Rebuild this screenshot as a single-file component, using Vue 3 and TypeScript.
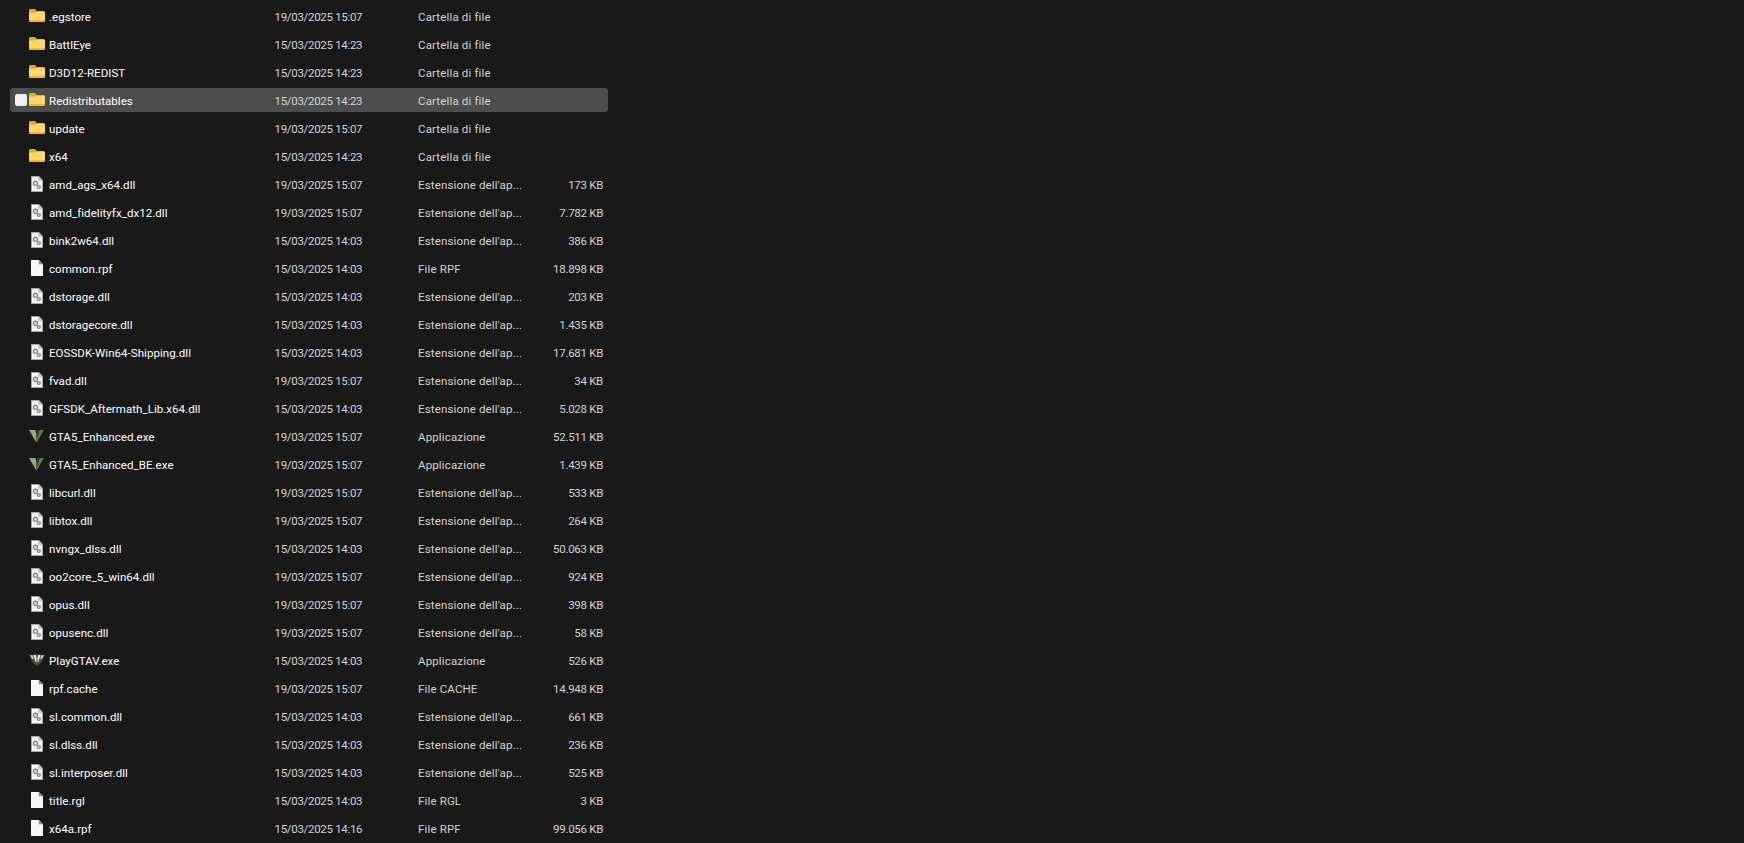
<script setup lang="ts">
type Kind = 'folder' | 'dll' | 'doc' | 'gta' | 'play'
interface Item { name: string; date: string; type: string; size: string; kind: Kind; selected?: boolean }

const A = '19/03/2025 15:07'
const B = '15/03/2025 14:23'
const C = '15/03/2025 14:03'
const FOLDER = 'Cartella di file'
const EXT = "Estensione dell'ap..."
const APP = 'Applicazione'

const items: Item[] = [
  { name: '.egstore', date: A, type: FOLDER, size: '', kind: 'folder' },
  { name: 'BattlEye', date: B, type: FOLDER, size: '', kind: 'folder' },
  { name: 'D3D12-REDIST', date: B, type: FOLDER, size: '', kind: 'folder' },
  { name: 'Redistributables', date: B, type: FOLDER, size: '', kind: 'folder', selected: true },
  { name: 'update', date: A, type: FOLDER, size: '', kind: 'folder' },
  { name: 'x64', date: B, type: FOLDER, size: '', kind: 'folder' },
  { name: 'amd_ags_x64.dll', date: A, type: EXT, size: '173 KB', kind: 'dll' },
  { name: 'amd_fidelityfx_dx12.dll', date: A, type: EXT, size: '7.782 KB', kind: 'dll' },
  { name: 'bink2w64.dll', date: C, type: EXT, size: '386 KB', kind: 'dll' },
  { name: 'common.rpf', date: C, type: 'File RPF', size: '18.898 KB', kind: 'doc' },
  { name: 'dstorage.dll', date: C, type: EXT, size: '203 KB', kind: 'dll' },
  { name: 'dstoragecore.dll', date: C, type: EXT, size: '1.435 KB', kind: 'dll' },
  { name: 'EOSSDK-Win64-Shipping.dll', date: C, type: EXT, size: '17.681 KB', kind: 'dll' },
  { name: 'fvad.dll', date: A, type: EXT, size: '34 KB', kind: 'dll' },
  { name: 'GFSDK_Aftermath_Lib.x64.dll', date: C, type: EXT, size: '5.028 KB', kind: 'dll' },
  { name: 'GTA5_Enhanced.exe', date: A, type: APP, size: '52.511 KB', kind: 'gta' },
  { name: 'GTA5_Enhanced_BE.exe', date: A, type: APP, size: '1.439 KB', kind: 'gta' },
  { name: 'libcurl.dll', date: A, type: EXT, size: '533 KB', kind: 'dll' },
  { name: 'libtox.dll', date: A, type: EXT, size: '264 KB', kind: 'dll' },
  { name: 'nvngx_dlss.dll', date: C, type: EXT, size: '50.063 KB', kind: 'dll' },
  { name: 'oo2core_5_win64.dll', date: A, type: EXT, size: '924 KB', kind: 'dll' },
  { name: 'opus.dll', date: A, type: EXT, size: '398 KB', kind: 'dll' },
  { name: 'opusenc.dll', date: A, type: EXT, size: '58 KB', kind: 'dll' },
  { name: 'PlayGTAV.exe', date: C, type: APP, size: '526 KB', kind: 'play' },
  { name: 'rpf.cache', date: A, type: 'File CACHE', size: '14.948 KB', kind: 'doc' },
  { name: 'sl.common.dll', date: C, type: EXT, size: '661 KB', kind: 'dll' },
  { name: 'sl.dlss.dll', date: C, type: EXT, size: '236 KB', kind: 'dll' },
  { name: 'sl.interposer.dll', date: C, type: EXT, size: '525 KB', kind: 'dll' },
  { name: 'title.rgl', date: C, type: 'File RGL', size: '3 KB', kind: 'doc' },
  { name: 'x64a.rpf', date: '15/03/2025 14:16', type: 'File RPF', size: '99.056 KB', kind: 'doc' },
]
</script>

<template>
  <div class="list">
    <div v-for="item in items" :key="item.name" class="row" :class="{ selected: item.selected }">
      <span class="check"><i v-if="item.selected" class="box"></i></span>
      <span class="icon">
        <svg v-if="item.kind === 'folder'" width="16" height="14" viewBox="0 0 16 14">
          <path d="M0 1.500C0 .7.600 0 1.400 0h4c.4 0 .8.200 1 .5L8 2h6.500c.8 0 1.500.7 1.500 1.500V5H0z" fill="#e8a522"/>
          <path d="M0 3.500h6.500L8 2.800h6.500c.8 0 1.500.6 1.500 1.400v7.400c0 .8-.7 1.400-1.500 1.400h-13C.7 13 0 12.400 0 11.600z" fill="#fdd868"/>
          <path d="M0 11.500c0 .8.700 1.500 1.500 1.500h13c.8 0 1.500-.7 1.500-1.500V11H0z" fill="#efb53a"/>
        </svg>
        <svg v-else-if="item.kind === 'dll'" class="nudge" width="12" height="16" viewBox="0 0 12 16">
          <path d="M.5.500h7.300l3.700 3.700v11.300H.5z" fill="#f4f4f4" stroke="#a6a6a6"/>
          <path d="M7.800.5v3.700h3.700z" fill="#d2d2d2" stroke="#9a9a9a" stroke-width=".6"/>
          <circle cx="4.500" cy="7.300" r="2.100" fill="#dcdcdc" stroke="#8f8f8f" stroke-width="1.400"/>
          <circle cx="7.800" cy="11" r="1.500" fill="#dcdcdc" stroke="#7d7d7d" stroke-width="1.200"/>
        </svg>
        <svg v-else-if="item.kind === 'doc'" class="nudge" width="12" height="16" viewBox="0 0 12 16">
          <path d="M0 0h7.800L12 4.200V16H0z" fill="#f7f7f7"/>
          <path d="M7.800 0v4.200H12z" fill="#8c8c8c"/>
        </svg>
        <svg v-else-if="item.kind === 'gta'" width="15" height="12" viewBox="0 0 15 12">
          <path d="M0 0h6.200L7.500 4 7.500 12H7L1.800 3z" fill="#9aa58a"/>
          <path d="M7.500 4L8.800 0H15l-1.800 3L8 12h-.5z" fill="#587a35"/>
          <path d="M7.500 4L8.800 0h2L8.500 7.500 7.500 8z" fill="#2f4420"/>
        </svg>
        <svg v-else width="16" height="12" viewBox="0 0 16 12">
          <path d="M0 .6l3.200.7L5 .2h6l1.800 1.100L16 .6l-1.800 3.600-1.700 4.300L9 11.500H7L3.500 8.500 1.800 4.200z" fill="#4a4c47"/>
          <path d="M1 1.200h2.500l1.500 3-1.800 1zM15 1.200h-2.500l-1.500 3 1.800 1z" fill="#c9cbc3"/>
          <path d="M4.500 1h2.300L8 6l1.200-5h2.300L9.500 8h-3z" fill="#e6e8e0"/>
          <path d="M6.800 5.500h2.400L8 10.500z" fill="#5e8a34"/>
        </svg>
      </span>
      <span class="name cell">{{ item.name }}</span>
      <span class="date cell">{{ item.date }}</span>
      <span class="type cell">{{ item.type }}</span>
      <span class="size cell">{{ item.size }}</span>
    </div>
  </div>
</template>

<style>
html, body { background: #191919; }
</style>

<style scoped>
.list {
  display: flex;
  flex-direction: column;
  gap: 4px;
  height: 843px;
  box-sizing: border-box;
  padding: 4px 0 0 10px;
  overflow: hidden;
  background: #191919;
  font-family: Roboto, "Open Sans", sans-serif;
  font-size: 11.5px;
}
.row {
  display: grid;
  grid-template-columns: 19px 20px 225.5px 143.5px 130px 55px;
  align-items: center;
  flex: none;
  width: 598px;
  height: 24px;
  border-radius: 3px;
  white-space: nowrap;
}
.row.selected { background: #4d4d4d; }
.check { display: flex; padding-left: 5px; }
.box {
  width: 12px;
  height: 12px;
  border-radius: 2px;
  background: #efefef;
}
.icon { display: flex; align-items: center; height: 16px; }
.nudge { margin-left: 2px; }
.cell { padding-top: 2px; }
.name { color: #fff; letter-spacing: 0.05px; }
.date { color: #d4d4d4; letter-spacing: -0.31px; }
.type { color: #d4d4d4; letter-spacing: 0.15px; }
.size { color: #d4d4d4; text-align: right; letter-spacing: -0.3px; }
</style>
